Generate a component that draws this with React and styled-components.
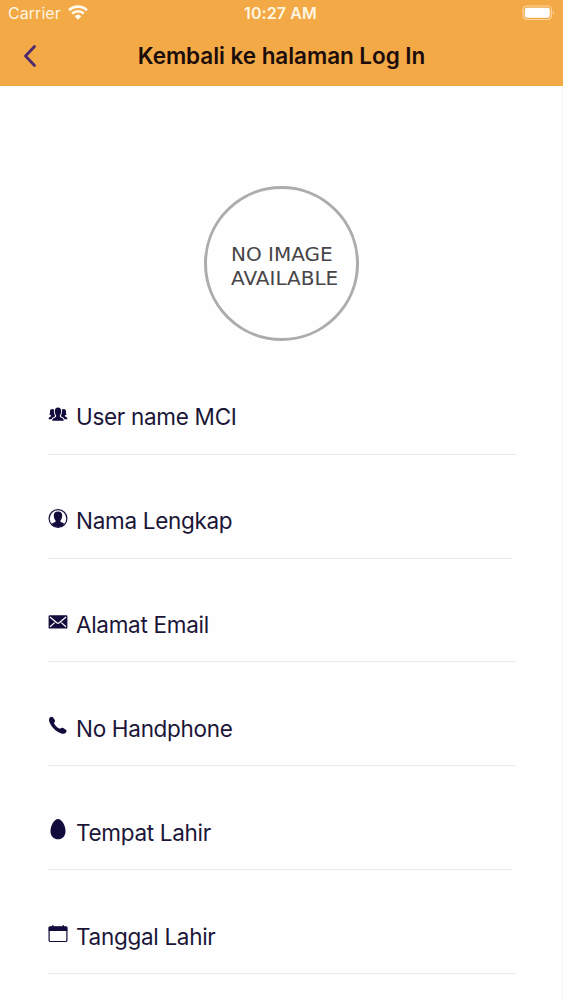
import styled, { createGlobalStyle } from 'styled-components'

const NAVY = '#120c3c'

const PeopleIcon = () => (
  <Glyph viewBox='0 0 20 20'>
    <path d='M10 2.5c2 0 3.200 1.300 3.200 3.500 0 1.700-.5 3.200-1.300 4.300-.3 1.500.3 2 1.500 2.500 1.500.6 2.300 1.200 2.300 2.900H4.300c0-1.700.8-2.300 2.300-2.900 1.200-.5 1.800-1 1.500-2.500C7.300 9.200 6.800 7.700 6.800 6c0-2.200 1.200-3.500 3.200-3.500z' />
    <path d='M4.400 4c.7 0 1.200.2 1.600.6-.3 2.200.1 4.200 1 5.800.1.900-.3 1.300-1.100 1.600-1.300.5-2 1-2.300 2.200H.6c0-1.400.8-2 1.700-2.400.8-.3 1-.8.7-1.600-.7-.1-1.200-.3-1.600-.7.8-1 .5-2.100.6-3.200C2.100 4.900 3 4 4.400 4z' />
    <path d='M15.600 4c-.7 0-1.200.2-1.600.6.3 2.200-.1 4.200-1 5.800-.1.900.3 1.300 1.100 1.600 1.300.5 2 1 2.300 2.200h3c0-1.400-.8-2-1.700-2.400-.8-.3-1-.8-.7-1.600.7-.1 1.200-.3 1.600-.7-.8-1-.5-2.100-.6-3.200-.1-1.400-1-2.300-2.400-2.300z' />
  </Glyph>
)

const ContactIcon = () => (
  <Glyph viewBox='0 0 20 20'>
    <circle cx='10' cy='9.5' r='8.900' fill='none' stroke={NAVY} strokeWidth='1.2' />
    <path d='M10 2.500c2.700 0 4.200 1.500 4.200 4 0 2.100-.6 3.900-1.700 4.900-.2 1.300.2 1.700 1.400 2.100 1.200.4 2 .8 2.500 1.600A8.700 8.700 0 0 1 10 18.200a8.700 8.700 0 0 1-6.400-3.100c.5-.8 1.300-1.200 2.500-1.600 1.200-.4 1.600-.8 1.400-2.100-1.100-1-1.700-2.800-1.700-4.900 0-2.500 1.500-4 4.200-4z' />
  </Glyph>
)

const MailIcon = () => (
  <Glyph viewBox='0 0 20 20'>
    <rect x='.6' y='3.200' width='18.800' height='13.400' rx='1.2' />
    <path d='M1.900 5l6.900 5.700q1.200.9 2.400 0L18.100 5M2 14.800l4.700-4.200M18 14.800l-4.700-4.200' fill='none' stroke='#fff' strokeWidth='1.2' />
  </Glyph>
)

const CallIcon = () => (
  <Glyph viewBox='0 0 20 20'>
    <path d='M2.100 1.300c1.100-.9 2.200-.9 3 .1l1.600 2.400c.6.900.4 1.700-.2 2.400-.5.600-.5 1-.1 1.700 1.100 1.800 2.600 3.300 4.500 4.400.8.500 1.300.4 1.900-.1.800-.7 1.600-.7 2.400-.2l2.600 1.700c1 .8 1 1.700.2 2.700-1.200 1.400-2.800 1.900-4.800 1C7.500 15.100 3.300 10.900 1.400 5.900.7 4 .9 2.400 2.100 1.300z' />
  </Glyph>
)

const EggIcon = () => (
  <Glyph viewBox='0 0 20 20'>
    <path d='M10-1c4 0 7.500 6.900 7.500 12 0 5.300-3.300 8.300-7.500 8.300S2.500 16.300 2.500 11C2.500 5.900 6-1 10-1z' />
  </Glyph>
)

const CalendarIcon = () => (
  <Glyph viewBox='0 0 20 20'>
    <rect x='1.100' y='2.800' width='17.800' height='14.700' rx='1.300' fill='none' stroke={NAVY} strokeWidth='1.2' />
    <path d='M.7 2.800h18.600v4.200H.7zM4 1.200h1.500v2H4zM14.500 1.200H16v2h-1.500z' />
  </Glyph>
)

const fields = [
  { label: 'User name MCI', icon: PeopleIcon, line: 468 },
  { label: 'Nama Lengkap', icon: ContactIcon, line: 464 },
  { label: 'Alamat Email', icon: MailIcon, line: 468 },
  { label: 'No Handphone', icon: CallIcon, line: 467 },
  { label: 'Tempat Lahir', icon: EggIcon, line: 464 },
  { label: 'Tanggal Lahir', icon: CalendarIcon, line: 468 },
]

const App = () => {
  return (
    <Screen>
      <GlobalStyle />
      <Header>
        <StatusBar>
          <Carrier>
            Carrier
            <WifiIcon viewBox='0 0 20 15'>
              <path d='M1 5.200a13 13 0 0 1 18 0M4.200 8.600a8.300 8.300 0 0 1 11.600 0' fill='none' stroke='#fffaf0' strokeWidth='2.700' />
              <path d='M6.600 11.200a5 5 0 0 1 6.800 0L10 14.700z' fill='#fffaf0' />
            </WifiIcon>
          </Carrier>
          <Time>10:27 AM</Time>
          <BatteryIcon viewBox='0 0 34 16'>
            <rect x='1' y='1' width='28.500' height='13.500' rx='4' fill='none' stroke='#f9d5a2' strokeWidth='1.2' />
            <rect x='2.800' y='2.800' width='25' height='10' rx='2.300' fill='#fff' />
            <path d='M31 5.500q2 2.200 0 4.500z' fill='#f9d5a2' />
          </BatteryIcon>
        </StatusBar>
        <NavBar>
          <BackIcon viewBox='0 0 14 24'>
            <path d='M11.500 2.500L2.500 12l9 9.500' />
          </BackIcon>
          <Title>Kembali ke halaman Log In</Title>
          <span />
        </NavBar>
      </Header>
      <Profile>
        <Avatar>
          <div>NO IMAGE</div>
          <div>AVAILABLE</div>
        </Avatar>
      </Profile>
      <Form>
        {fields.map(({ label, icon: FieldIcon, line }) => (
          <Field key={label} $line={line}>
            <FieldIcon />
            <Label>{label}</Label>
          </Field>
        ))}
      </Form>
    </Screen>
  )
}

export default App

const GlobalStyle = createGlobalStyle`
  * {
    box-sizing: border-box;
  }

  body {
    margin: 0;
    background: #fefefe;
    font-family: Inter, 'Liberation Sans', sans-serif;
  }
`

const Screen = styled.div`
  width: 563px;
  height: 1000px;
  overflow: hidden;
  background: linear-gradient(to right, #fefefe 562px, #f6f4f8 562px);
`

const Header = styled.header`
  height: 86px;
  background: #f3a945;
`

const StatusBar = styled.div`
  display: grid;
  grid-template-columns: 1fr auto 1fr;
  align-items: center;
  height: 26px;
  padding: 0 7px 0 8px;
  color: #fff6e2;
  font-size: 16px;
`

const Carrier = styled.div`
  display: flex;
  align-items: center;
  gap: 7px;
  letter-spacing: 0.05px;
`

const WifiIcon = styled.svg`
  width: 20px;
  height: 15px;
  margin-top: -2px;
`

const Time = styled.div`
  margin: 0 3px 0 0;
  font-weight: 600;
  letter-spacing: 0.1px;
`

const BatteryIcon = styled.svg`
  width: 34px;
  height: 16px;
  justify-self: end;
`

const NavBar = styled.div`
  display: grid;
  grid-template-columns: 60px 1fr 60px;
  align-items: center;
  height: 60px;
`

const BackIcon = styled.svg`
  width: 14px;
  height: 24px;
  margin-left: 23px;
  fill: none;
  stroke: #4c2a72;
  stroke-width: 2.8;
  stroke-linecap: round;
  stroke-linejoin: round;
`

const Title = styled.h1`
  margin: 0 0 2px;
  color: #1c0d0c;
  font-size: 22.5px;
  font-weight: 600;
  letter-spacing: -0.05px;
  text-align: center;
  white-space: nowrap;
`

const Profile = styled.div`
  display: flex;
  justify-content: center;
  height: 264.8px;
  padding-top: 100px;
`

const Avatar = styled.div`
  display: flex;
  flex-direction: column;
  justify-content: center;
  width: 155px;
  height: 155px;
  padding: 5px 0 0 24px;
  border: 3px solid #adabad;
  border-radius: 50%;
  color: #474547;
  font-family: 'DejaVu Sans', sans-serif;
  font-size: 20px;
  line-height: 24px;
  white-space: nowrap;
`

const Form = styled.div`
  padding-left: 48px;
`

const Field = styled.div`
  display: flex;
  align-items: flex-start;
  width: ${({ $line }) => $line}px;
  height: 103.9px;
  padding-top: 52.6px;
  border-bottom: 1px solid #e9e8ea;
`

const Glyph = styled.svg`
  flex: none;
  width: 20px;
  height: 20px;
  margin: 1.3px 8px 0 0;
  fill: ${NAVY};
  overflow: visible;
`

const Label = styled.div`
  color: #1b1638;
  font-size: 22.5px;
  line-height: 28px;
  letter-spacing: -0.3px;
  white-space: nowrap;
`
